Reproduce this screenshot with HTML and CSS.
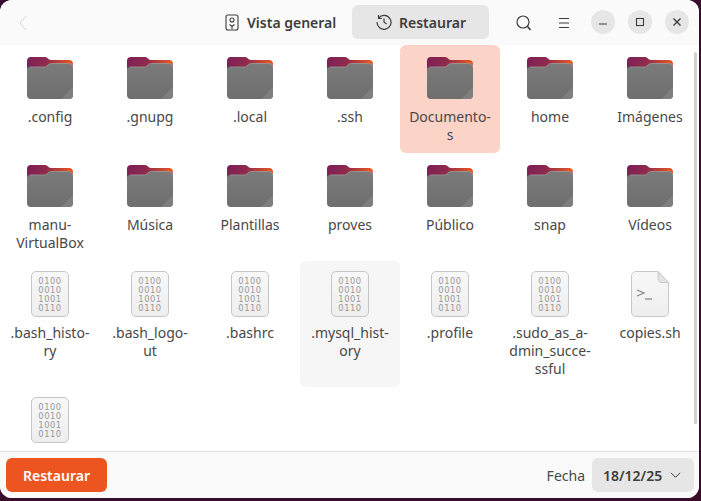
FILE: index.html
```html
<!DOCTYPE html>
<html lang="es">
<head>
  <meta charset="UTF-8" />
  <meta name="viewport" content="width=device-width, initial-scale=1.0" />
  <title>Restaurar</title>
  <link rel="stylesheet" href="styles.css">
</head>
<body>
  <!-- Shared icons -->
  <svg class="defs" width="0" height="0">
    <defs>
      <linearGradient id="tabGrad" x1="0" y1="0" x2="1" y2="0.2">
        <stop offset="0" stop-color="#7b1f58" />
        <stop offset="0.45" stop-color="#8f2a4c" />
        <stop offset="1" stop-color="#ec5a1f" />
      </linearGradient>
      <linearGradient id="frontGrad" x1="0" y1="0" x2="0" y2="1">
        <stop offset="0" stop-color="#7b7b7b" />
        <stop offset="1" stop-color="#6e6e6e" />
      </linearGradient>
      <linearGradient id="docGrad" x1="0" y1="0" x2="0" y2="1">
        <stop offset="0" stop-color="#f8f8f8" />
        <stop offset="1" stop-color="#eeeeee" />
      </linearGradient>
      <symbol id="folder" viewBox="0 0 46 42">
        <path d="M0 4a4 4 0 0 1 4-4h14c3 0 3 3 6 3h18a4 4 0 0 1 4 4v12H0z" fill="url(#tabGrad)" />
        <path d="M3 10h14c2 0 2.500-.5 4-2 1-1 2-1.500 3.500-1.500H42a4 4 0 0 1 4 4V38a4 4 0 0 1-4 4H4a4 4 0 0 1-4-4V13a3 3 0 0 1 3-3z" fill="url(#frontGrad)" />
        <path d="M3 10h14c2 0 2.500-.5 4-2 1-1 2-1.500 3.500-1.500H42a4 4 0 0 1 4 4" fill="none" stroke="#9a9a9a" stroke-width="0.8" />
        <path d="M46 30v8a4 4 0 0 1-4 4H34z" fill="#7f7f7f" />
      </symbol>
      <symbol id="binary" viewBox="0 0 38 46">
        <rect x="0.500" y="0.500" width="37" height="45" rx="4.500" fill="url(#docGrad)" stroke="#c6c6c6" />
        <text class="bits" x="19" y="12.500">0100</text>
        <text class="bits" x="19" y="21.500">0010</text>
        <text class="bits" x="19" y="30.500">1001</text>
        <text class="bits" x="19" y="39.500">0110</text>
      </symbol>
      <symbol id="script" viewBox="0 0 38 46">
        <path d="M5 .5h22l10.500 11V41a4.500 4.500 0 0 1-4.500 4.500H5A4.500 4.500 0 0 1 .5 41V5A4.500 4.500 0 0 1 5 .5z" fill="url(#docGrad)" stroke="#c9c9c9" />
        <path d="M27 .5v7a4 4 0 0 0 4 4h6.500z" fill="#e4e4e4" stroke="#c9c9c9" />
        <path d="M6 19l7 3-7 3" fill="none" stroke="#8a8a8a" stroke-width="1.300" />
        <path d="M14 28h7" stroke="#8a8a8a" stroke-width="1.300" />
      </symbol>
    </defs>
  </svg>

  <div class="window">
    <header class="headerbar">
      <svg class="back-icon" width="8" height="16" viewBox="0 0 8 16"><path d="M7 1L1 8l6 7" fill="none" stroke="#d4d4d4" stroke-width="1" /></svg>

      <div class="tab">
        <svg width="14" height="17" viewBox="0 0 14 17" fill="none" stroke="#3d3d3d" stroke-width="1.100">
          <rect x="1" y="1" width="12" height="15" rx="2" />
          <circle cx="7" cy="6" r="2" />
          <path d="M4.500 10.500L7 12.500l2.500-2M7 12.500V15" />
        </svg>
        <span>Vista general</span>
      </div>
      <div class="tab tab-active">
        <svg width="16" height="16" viewBox="0 0 16 16" fill="none" stroke="#3d3d3d" stroke-width="1.200">
          <path d="M2.800 3.600A7 7 0 1 1 1 8" />
          <path d="M2.500 1v3.300h3.300" />
          <path d="M8 4.500V8l2.500 2" />
        </svg>
        <span>Restaurar</span>
      </div>

      <div class="header-actions">
        <svg class="action search" width="15" height="16" viewBox="0 0 15 16" fill="none" stroke="#3d3d3d" stroke-width="1.200">
          <circle cx="7" cy="7" r="6" />
          <path d="M11.500 11.500L14.500 15" stroke-width="1.600" />
        </svg>
        <svg class="action menu" width="12" height="12" viewBox="0 0 12 12" stroke="#3d3d3d" stroke-width="1.100">
          <path d="M1 1.500h10M1 6h10M1 10.500h10" />
        </svg>
        <div class="win-buttons">
          <div class="win-btn"><svg width="10" height="10" viewBox="0 0 10 10"><path d="M1 7h8" stroke="#3d3d3d" stroke-width="1.200" /></svg></div>
          <div class="win-btn"><svg width="10" height="10" viewBox="0 0 10 10"><rect x="1.500" y="1.500" width="7" height="7" fill="none" stroke="#3d3d3d" stroke-width="1.100" /></svg></div>
          <div class="win-btn"><svg width="10" height="10" viewBox="0 0 10 10"><path d="M1.500 1.500l7 7M8.500 1.500l-7 7" stroke="#3d3d3d" stroke-width="1.400" /></svg></div>
        </div>
      </div>
    </header>

    <main class="files">
      <div class="grid">
        <div class="item"><svg class="icon"><use href="#folder" /></svg><p>.config</p></div>
        <div class="item"><svg class="icon"><use href="#folder" /></svg><p>.gnupg</p></div>
        <div class="item"><svg class="icon"><use href="#folder" /></svg><p>.local</p></div>
        <div class="item"><svg class="icon"><use href="#folder" /></svg><p>.ssh</p></div>
        <div class="item selected"><svg class="icon"><use href="#folder" /></svg><p>Documento-<br>s</p></div>
        <div class="item"><svg class="icon"><use href="#folder" /></svg><p>home</p></div>
        <div class="item"><svg class="icon"><use href="#folder" /></svg><p>Imágenes</p></div>

        <div class="item"><svg class="icon"><use href="#folder" /></svg><p>manu-<br>VirtualBox</p></div>
        <div class="item"><svg class="icon"><use href="#folder" /></svg><p>Música</p></div>
        <div class="item"><svg class="icon"><use href="#folder" /></svg><p>Plantillas</p></div>
        <div class="item"><svg class="icon"><use href="#folder" /></svg><p>proves</p></div>
        <div class="item"><svg class="icon"><use href="#folder" /></svg><p>Público</p></div>
        <div class="item"><svg class="icon"><use href="#folder" /></svg><p>snap</p></div>
        <div class="item"><svg class="icon"><use href="#folder" /></svg><p>Vídeos</p></div>

        <div class="item"><svg class="icon doc"><use href="#binary" /></svg><p>.bash_histo-<br>ry</p></div>
        <div class="item"><svg class="icon doc"><use href="#binary" /></svg><p>.bash_logo-<br>ut</p></div>
        <div class="item"><svg class="icon doc"><use href="#binary" /></svg><p>.bashrc</p></div>
        <div class="item hovered"><svg class="icon doc"><use href="#binary" /></svg><p>.mysql_hist-<br>ory</p></div>
        <div class="item"><svg class="icon doc"><use href="#binary" /></svg><p>.profile</p></div>
        <div class="item"><svg class="icon doc"><use href="#binary" /></svg><p>.sudo_as_a-<br>dmin_succe-<br>ssful</p></div>
        <div class="item"><svg class="icon doc"><use href="#script" /></svg><p>copies.sh</p></div>

        <div class="item"><svg class="icon doc"><use href="#binary" /></svg></div>
      </div>
      <div class="scrollbar"></div>
    </main>

    <footer class="footer">
      <button class="restore-btn">Restaurar</button>
      <span class="date-label">Fecha</span>
      <div class="date-pick">
        <span>18/12/25</span>
        <svg width="11" height="6" viewBox="0 0 11 6"><path d="M1 .8l4.500 4.500L10 .8" fill="none" stroke="#3d3d3d" stroke-width="1" /></svg>
      </div>
    </footer>
  </div>
</body>
</html>
```

FILE: styles.css
```css
* {
  box-sizing: border-box;
  margin: 0;
  padding: 0;
}

html, body {
  width: 701px;
  height: 501px;
  overflow: hidden;
}

body {
  font-family: 'Noto Sans', sans-serif;
  font-size: 14px;
  background: #380c2a;
  color: #3d3d3d;
}

.defs {
  display: block;
  height: 0;
}

.bits {
  font-family: 'DejaVu Sans', sans-serif;
  font-size: 8.400px;
  letter-spacing: 0.500px;
  text-anchor: middle;
  fill: #999;
}

.window {
  width: 699px;
  height: 498px;
  background: #fff;
  border-radius: 12px;
  overflow: hidden;
  display: flex;
  flex-direction: column;
}

/* === HEADER === */
.headerbar {
  height: 45px;
  flex-shrink: 0;
  background: #fafafa;
  display: flex;
  align-items: center;
  padding-left: 19px;
}

.back-icon {
  margin-right: 188px;
}

.tab {
  width: 137px;
  height: 34px;
  margin-top: -1px;
  border-radius: 6px;
  display: flex;
  align-items: center;
  gap: 8px;
  padding-left: 10px;
  font-weight: 600;
  white-space: nowrap;
}

.tab-active {
  background: #e6e6e6;
  padding-left: 24px;
  gap: 7px;
}

.header-actions {
  display: flex;
  align-items: center;
  margin-left: 27px;
}

.search {
  margin-right: 27px;
}

.menu {
  margin-right: 21px;
}

.win-buttons {
  display: flex;
  gap: 13px;
  margin-top: -1px;
}

.win-btn {
  width: 24px;
  height: 24px;
  border-radius: 50%;
  background: #e6e6e6;
  display: flex;
  align-items: center;
  justify-content: center;
}

/* === FILE GRID === */
.files {
  flex: 1;
  min-height: 0;
  overflow: hidden;
  position: relative;
}

.grid {
  display: grid;
  grid-template-columns: repeat(7, 100px);
  grid-template-rows: 108px 108px 126px 108px;
}

.item {
  padding-top: 12px;
  text-align: center;
  border-radius: 6px;
  font-size: 14px;
  line-height: 18px;
  color: #484848;
}

.icon {
  display: block;
  width: 46px;
  height: 42px;
  margin: 0 auto 9px;
}

.doc {
  width: 38px;
  height: 46px;
  margin-top: -2px;
  margin-bottom: 7px;
}

.selected {
  background: #fbd4c7;
}

.hovered {
  background: #f6f6f6;
}

.scrollbar {
  position: absolute;
  top: 7px;
  right: 2px;
  width: 3px;
  height: 372px;
  border-radius: 2px;
  background: #d0d0d0;
}

/* === FOOTER === */
.footer {
  height: 47px;
  flex-shrink: 0;
  background: #fafafa;
  border-top: 1px solid #e2e2e2;
  display: flex;
  align-items: center;
  padding: 0 5px 0 6px;
}

.restore-btn {
  width: 101px;
  height: 34px;
  border: none;
  border-radius: 6px;
  background: #ec5520;
  color: #fff;
  font-family: inherit;
  font-size: 14px;
  font-weight: 600;
}

.date-label {
  margin-left: auto;
  margin-right: 7px;
  color: #484848;
}

.date-pick {
  width: 102px;
  height: 34px;
  border-radius: 6px;
  background: #e6e6e6;
  display: flex;
  align-items: center;
  justify-content: space-between;
  padding: 0 13px 0 11px;
  font-weight: 600;
}
```
